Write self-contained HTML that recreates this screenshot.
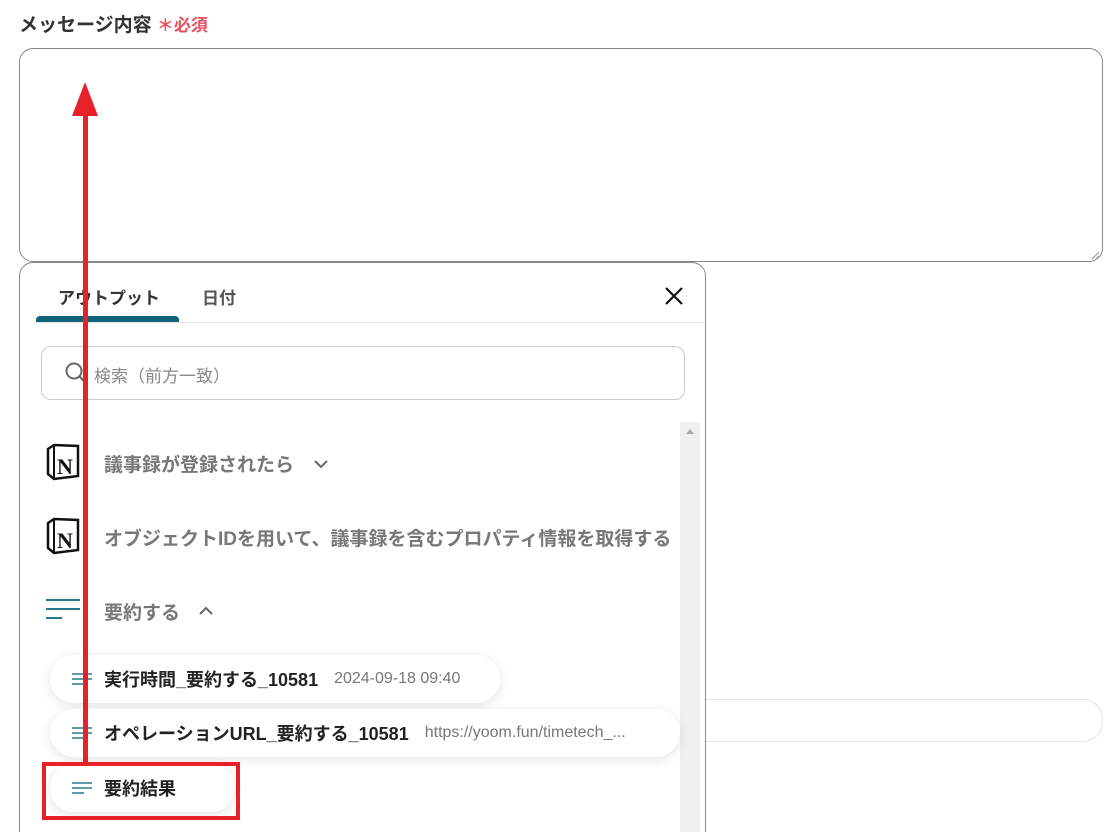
<!DOCTYPE html>
<html style="width:1118px;height:832px;overflow:hidden"><head><meta charset="utf-8"><style>
*{box-sizing:border-box;margin:0;padding:0}
body{width:1118px;height:832px;background:#fff;position:relative;overflow:hidden;font-family:"Liberation Sans","Noto Sans CJK JP",sans-serif;color:#222}
.a{position:absolute}
.lbl{left:19px;top:10px;font-size:19px;font-weight:bold;color:#333}
.req{color:#e8505b;font-size:17px;font-weight:bold}
.ta{left:19px;top:48px;width:1084px;height:214px;border:1px solid #888;border-radius:14px}
.bg2{left:650px;top:699px;width:453px;height:43px;border:1px solid #e4e4e4;border-radius:20px}
.panel{left:19px;top:262px;width:687px;height:600px;border:1px solid #888;border-radius:14px;background:#fff}
.tab{font-size:17px;font-weight:bold}
.chip{background:#fff;border-radius:24px;box-shadow:0 3px 12px rgba(0,0,0,.1);height:48px;display:flex;align-items:center;padding-left:22px;font-size:18px;font-weight:bold;color:#222;white-space:nowrap}
.chip small{font-size:16px;font-weight:normal;color:#777;margin-left:16px}
.gi{font-size:19px;font-weight:bold;color:#777}
</style></head><body>
<div class="a lbl">メッセージ内容 <span class="req">＊必須</span></div>
<div class="a ta"></div>
<svg class="a" style="left:1090px;top:250px" width="10" height="10"><path d="M2 9L9 2M6 9L9 6" stroke="#999"/></svg>
<div class="a bg2"></div>
<div class="a panel"></div>
<div class="a tab" style="left:58px;top:284px;color:#333">アウトプット</div>
<div class="a tab" style="left:202px;top:284px;color:#555">日付</div>
<div class="a" style="left:36px;top:316px;width:143px;height:6px;background:#0f6478;border-radius:4px 4px 0 0"></div>
<div class="a" style="left:36px;top:322px;width:668px;height:1px;background:#e4e4e4"></div>
<svg class="a" style="left:663px;top:285px" width="22" height="22"><path d="M3 3L19 19M19 3L3 19" stroke="#111" stroke-width="2.2"/></svg>
<div class="a" style="left:41px;top:346px;width:644px;height:54px;border:1px solid #ccc;border-radius:10px"></div>
<svg class="a" style="left:64px;top:361px" width="24" height="24"><circle cx="10" cy="10" r="7.5" fill="none" stroke="#666" stroke-width="2"/><path d="M15.5 15.5L21 21" stroke="#666" stroke-width="2.2"/></svg>
<div class="a" style="left:94px;top:362px;font-size:17px;color:#888">検索（前方一致）</div>
<div class="a" style="left:680px;top:422px;width:20px;height:410px;background:#f0f0f0"></div>
<svg class="a" style="left:685px;top:427px" width="10" height="8"><path d="M1 7L5 2L9 7Z" fill="#aaa"/></svg>
<svg class="a" style="left:44px;top:443px" width="38" height="38"><path d="M4 6L10 2L34 3L34 33L10 36L4 31Z" fill="#fff" stroke="#111" stroke-width="2.5"/><path d="M10 2L10 36" stroke="#111" stroke-width="2"/><text x="21" y="31" font-family="Liberation Serif" font-weight="bold" font-size="22" text-anchor="middle" fill="#111">N</text></svg>
<div class="a gi" style="left:104px;top:450px">議事録が登録されたら</div>
<svg class="a" style="left:313px;top:457px" width="16" height="14"><path d="M2 4L8 10L14 4" stroke="#666" stroke-width="2" fill="none"/></svg>
<svg class="a" style="left:44px;top:517px" width="38" height="38"><path d="M4 6L10 2L34 3L34 33L10 36L4 31Z" fill="#fff" stroke="#111" stroke-width="2.5"/><path d="M10 2L10 36" stroke="#111" stroke-width="2"/><text x="21" y="31" font-family="Liberation Serif" font-weight="bold" font-size="22" text-anchor="middle" fill="#111">N</text></svg>
<div class="a gi" style="left:104px;top:524px;white-space:nowrap;width:574px;overflow:hidden">オブジェクトIDを用いて、議事録を含むプロパティ情報を取得する</div>
<svg class="a" style="left:44px;top:598px" width="38" height="24"><path d="M2 2H36M2 11H36M2 20H18" stroke="#2a7a8c" stroke-width="2"/></svg>
<div class="a gi" style="left:104px;top:598px">要約する</div>
<svg class="a" style="left:198px;top:604px" width="16" height="14"><path d="M2 10L8 4L14 10" stroke="#666" stroke-width="2" fill="none"/></svg>
<div class="a chip" style="left:50px;top:655px;width:450px"><svg width="22" height="14" style="margin-right:10px"><path d="M0 2H20M0 7H20M0 12H12" stroke="#2a7a8c" stroke-width="1.6"/></svg>実行時間_要約する_10581<small>2024-09-18 09:40</small></div>
<div class="a chip" style="left:50px;top:709px;width:630px"><svg width="22" height="14" style="margin-right:10px"><path d="M0 2H20M0 7H20M0 12H12" stroke="#2a7a8c" stroke-width="1.6"/></svg>オペレーションURL_要約する_10581<small>https://yoom.fun/timetech_...</small></div>
<div class="a chip" style="left:50px;top:764px;width:185px"><svg width="22" height="14" style="margin-right:10px"><path d="M0 2H20M0 7H20M0 12H12" stroke="#2a7a8c" stroke-width="1.6"/></svg>要約結果</div>
<div class="a" style="left:42px;top:762px;width:198px;height:58px;border:4px solid #e8202a"></div>
<div class="a" style="left:83px;top:112px;width:5px;height:652px;background:#e8202a"></div>
<svg class="a" style="left:71px;top:81px" width="28" height="35"><path d="M14 1L27 35H1Z" fill="#e8202a"/></svg>
</body></html>
